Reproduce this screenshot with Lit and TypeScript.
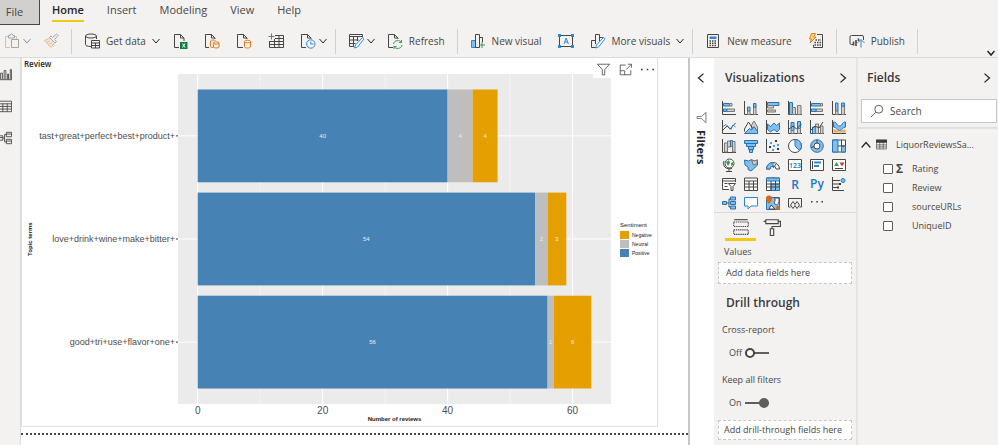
import { html, svg, css, LitElement, TemplateResult, SVGTemplateResult, nothing } from 'lit';
import { customElement, state } from 'lit/decorators.js';
import { classMap } from 'lit/directives/class-map.js';

interface RibbonItem {
  icon: string;
  title: string;
  label?: string;
  menu?: boolean;
  disabled?: boolean;
}

interface TopicRow {
  topic: string;
  positive: number;
  neutral: number;
  negative: number;
}

// 16 x 16 icons. Strokes are inherited, classes give the accent colours
const icons: Record<string, SVGTemplateResult> = {
  paste: svg`<path class="orange" d="M6 14.500H1.500V3.500H4M10 3.500h2.500V6"/><path d="M4.500 5V2.500h1.500a1.500 1.500 0 0 1 3 0h1.500V5zM7.500 6.500h7v8h-7z"/>`,
  brush: svg`<path class="orange fill-peach" d="M7 5 1.500 7.500 8 14.500l3.500-5zM4 9l3-1M6 11.500l3-2"/><path d="M6.500 4.500l5.500 5.500 1.500-1.500-2-2 3.500-4-1.500-1.500-4 3.500L8 3z"/>`,
  database: svg`<path d="M7 13.500c-3.500 0-5.500-.8-5.500-2V3M12.500 3v3"/><ellipse cx="7" cy="3" rx="5.500" ry="2"/><path d="M7.500 7.500h8v7.500h-8zM7.500 10h8M11.500 10v5M7.500 12.500h8"/>`,
  excel: svg`<path d="M7 14.500H2.500V1.500h6l3.500 3.500v3M8.500 1.500V5H12"/><path class="fill-green" d="M8 9h7.500v7H8z"/><path class="white" d="M10.500 10.500l2.500 4M13 10.500l-2.500 4"/>`,
  hub: svg`<path d="M5 14.500H1.500V1.500h6L11 5v1M7.500 1.500V5H11"/><path class="orange" d="M6.500 8v5.500c0 1 3 1 3 1M6.500 8c0-1.300 5-1.300 5 0M9.500 10v4c0 1.300 5.500 1.300 5.500 0v-4"/><ellipse class="orange" cx="12.200" cy="10" rx="2.700" ry="1.200"/>`,
  sql: svg`<path d="M7 14.500H1.500V1.500h6L11 5v1M7.500 1.500V5H11"/><path class="orange" d="M8.500 8.500v5.300c0 1.600 6 1.600 6 0V8.500"/><ellipse class="orange" cx="11.500" cy="8.500" rx="3" ry="1.300"/>`,
  enter: svg`<path d="M7 2.500h8.500v12h-14V8M7 5.500h8.500M2 8.500h13.500M2 11.500h13.500M6.500 6v8.500M11 3v11.500"/><path class="green" d="M3.500.5v6M.5 3.500h6"/>`,
  recent: svg`<path d="M6 14.500H1.500V1.500h6L11 5v1M7.500 1.500V5H11"/><circle class="blue" cx="10.800" cy="11" r="4.200"/><path class="blue" d="M10.800 8.500V11h2.500"/>`,
  transform: svg`<path d="M6 13.500H1.500v-12h13V4M1.500 3.500h13M1.500 7h9M1.500 10.500h6M5.500 4v9M9.500 4v4"/><path class="blue fill-white" d="M6.500 15l1-3 6.500-7c1-1 2.500.5 1.500 1.500L9.500 14z"/>`,
  refresh: svg`<path d="M6 14.500H1.500V1.500h6L11 5v1M7.500 1.500V5H11"/><path class="green" d="M6.500 11c.5-4 6.500-4.500 8-1.500M14.500 7v2.500H12M15 12c-.5 4-6.500 4.500-8 1.500M7 16v-2.500h2.500"/>`,
  newVisual: svg`<path class="blue fill-blue" d="M1.500 7.500h4v7h-4z"/><path d="M5.500 14.500v-13h4v13zM9.500 4.500h3V9"/><path class="green" d="M12 9v6M9 12h6"/>`,
  textBox: svg`<path d="M1.500 2.500h13v11h-13z"/><path class="blue" d="M6 11l2.200-6 2.200 6M6.700 9h3"/><path class="solid-blue" d="M0 1h3v3H0zM13 1h3v3h-3zM0 12h3v3H0zM13 12h3v3h-3z"/>`,
  moreVisuals: svg`<path d="M5.500 14.500h-4v-7h4M5.500 11V1.500h4V8M9.500 4.500h3v2"/><path class="blue fill-white" d="M5.500 15l1-3 6.500-7c1-1 2.500.5 1.500 1.500L8.500 14z"/>`,
  measure: svg`<path d="M2.500 1.500h11v13h-11z"/><path class="solid-blue" d="M4.500 3.500h7V6h-7z"/><path class="dots" d="M4.500 8h7M4.500 10.200h7M4.500 12.400h7"/>`,
  quick: svg`<path d="M9 1.500h5.500v13h-9V12"/><path class="dots" d="M7.500 7h5.500M6.500 9.500h6.500M6.500 12h6.500"/><path class="orange fill-amber" d="M3.500.5h4l-2 3.500h2.500l-6 6 1.500-4H1.500z"/>`,
  publish: svg`<path d="M4 11.500H2.500a1.500 1.500 0 0 1-1.500-1.500V4a1.500 1.500 0 0 1 1.500-1.500h10.500a1.500 1.500 0 0 1 1.500 1.500v3"/><path class="thick" d="M4.500 8.500v4M7 7v6M9.500 5.500V8"/><path class="blue" d="M12 14.500V7M8.500 10L12 6.500l3.500 3.500"/>`,
  report: svg`<path d="M.5 1v13.500H16M3 14V7h2v7M7 14V4h2v10M11 14V8h1v6M14 14V3h1.500v11"/>`,
  table: svg`<path d="M.5 2.500h15v12H.5zM.5 5.500h15M.5 8.500h15M.5 11.500h15M5.500 5v9.500M10.500 5v9.500"/>`,
  model: svg`<path d="M9.500 1.500h6v5h-6zM9.500 9.500h6v5h-6zM.5 5.500h5v5h-5zM9.500 3.500h6M9.500 11.500h6M.5 7.500h5M5.500 8h2M9.500 4h-2v8.500h2"/>`,
  funnel: svg`<path d="M.5 1.500h15L9.500 8v6.500h-3V8z"/>`,
  focus: svg`<path d="M8 2.500H1.500v12h13V9M1.500 9.500H7v5M9 8l6-6M11 1.500h4.500V6"/>`,
  more: svg`<path class="solid" d="M0 7h2v2H0zM7 7h2v2H7zM14 7h2v2h-2z"/>`,
  search: svg`<circle cx="10" cy="6" r="4.500"/><path d="M6.500 9.500L1 15"/>`,
  tableFilled: svg`<path d="M.5 1.500h15v13H.5zM.5 8.500h15M.5 11.500h15M5.500 5v9.500M10.500 5v9.500"/><path class="solid" d="M0 1h16v4.500H0z"/>`,
  wells: svg`<path stroke-dasharray="1.200 .7" d="M1.500 3.500h13v4h-13zM1.500 10.500h13v4h-13z"/><path d="M2 1.500h12"/>`,
  roller: svg`<path d="M2.500 1.500h11v3.500h-11zM2.500 3h-2M13.500 3h2v4.500H8v2M6.500 9.500h3v6h-3z"/>`,
};

// 14 x 14 glyphs of the visual gallery, in reading order
const axis = svg`<path d="M.5 0v13.500H14"/>`;
const visuals: Array<[string, SVGTemplateResult]> = [
  ['Stacked bar chart', svg`${axis}<path class="b" d="M1.500 2.500h6v2.500h-6z"/><path class="g" d="M7.500 2.500h2.500v2.500H7.500zM5 8h7.500v2.500H5z"/><path class="b" d="M1.500 8h3v2.500h-3z"/>`],
  ['Stacked column chart', svg`${axis}<path class="b" d="M3.500 6h2.500v4H3.500z"/><path class="g" d="M3.500 10h2.500v3.500H3.500zM9.500 6h2.500v7.500H9.500z"/><path class="b" d="M9.500 2.500h2.500v3.500H9.500z"/>`],
  ['Clustered bar chart', svg`${axis}<path class="b" d="M1.500 1.500h11.500v3H1.500z"/><path class="g" d="M1.500 4.500h6v2.500h-6zM1.500 9h8v2h-8z"/>`],
  ['Clustered column chart', svg`${axis}<path class="b" d="M1.500 1.500h3v12h-3z"/><path class="g" d="M4.500 6.500h3v7h-3zM9.500 4.500h3.500v9H9.500z"/>`],
  ['100% stacked bar chart', svg`${axis}<path class="b" d="M1.500 2.500h9v2.500h-9z"/><path class="g" d="M10.500 2.500h2v2.500h-2zM6 8h6.500v2.500H6z"/><path class="b" d="M1.500 8h4.500v2.500H1.500z"/>`],
  ['100% stacked column chart', svg`${axis}<path class="b" d="M3.500 2h2.500v8H3.500z"/><path class="g" d="M3.500 10h2.500v3.500H3.500zM9.500 5h3v8.500h-3z"/><path class="b" d="M9.500 2h3v3h-3z"/>`],
  ['Line chart', svg`${axis}<path d="M1 10l4-4 3 3 5.500-6"/><path class="bl" d="M1 6.500l3-2 5 5 2-4.500 2.500 2"/>`],
  ['Area chart', svg`<path class="g" d="M7 6l3-5 3.500 6v6H9z"/><path d="M.5 11.500V9l4-7 4 6"/><path class="b" d="M.5 13.500l5-5 2 1.500 2.500-3.500 3.500 5v2z"/>`],
  ['Stacked area chart', svg`${axis}<path class="b" d="M1.500 4l3 2.500L8 3l2.500 2.500L13.500 3v6.500L11 12l-3-2.500-3.500 2.500-3-2.500z"/>`],
  ['Line and stacked column chart', svg`${axis}<path class="b" d="M3 2.500h3v8H3zM9.500 1.500h3v7h-3z"/><path class="g" d="M3 10.500h3v3H3zM9.500 8.500h3v5h-3z"/><path d="M1 9l4-3 3.500 3L13.500 4"/>`],
  ['Line and clustered column chart', svg`${axis}<path class="b" d="M2.500 7h3v6.500h-3z"/><path class="g" d="M5.500 4h3v9.500h-3zM10.500 6h2.500v7.500h-2.500z"/><path d="M1 10l4-4 4 2 4-6"/>`],
  ['Ribbon chart', svg`${axis}<path class="o" d="M1.500 9c2 0 3 2.500 6 2.500s4-2.500 6-2.500v3.500h-12z"/><path class="b" d="M1.500 2c4 0 3 4 6 4s2-4 6-4v5c-3 0-3 3.500-6 3.500S4.500 7 1.500 7z"/>`],
  ['Waterfall chart', svg`${axis}<path class="g" d="M2.500 4h3v9h-3zM5.500 2h3v6h-3z"/><path class="b" d="M8.500 1.500h2v6h-2z"/><path class="g" d="M10.500 2.500H13v10.500h-2.500z"/>`],
  ['Funnel', svg`<path class="b" d="M.5 1.500h13v3H.5zM2.500 4.500h9v3h-9zM4.500 7.500h5v3h-5zM5.500 10.500h3v3h-3z"/>`],
  ['Scatter chart', svg`${axis}<path class="solid" d="M3 7h2v2H3zM9 1h2v2H9zM11 9h2v2h-2z"/><path class="sb" d="M4 3h2v2H4zM7 6h2v2H7zM11 5h2v2h-2zM6 10h2v2H6z"/>`],
  ['Pie chart', svg`<circle cx="7" cy="7" r="6.500" class="w"/><path class="b" d="M7 .5V7l4.500 4.700A6.500 6.500 0 0 0 7 .5z"/>`],
  ['Donut chart', svg`<circle cx="7" cy="7" r="6.300" class="b"/><circle cx="7" cy="7" r="3" class="w"/><path d="M7 .7V4M1 8.500l3-.7"/>`],
  ['Treemap', svg`<path class="w" d="M.5 1h13v12H.5z"/><path class="b" d="M.5 1H6v12H.5zM9.500 7h4v6h-4z"/><path d="M6 7h7.500M9.500 1v6"/>`],
  ['Map', svg`<circle cx="7.500" cy="5.500" r="4.500" class="w"/><path class="gr" d="M4 4l3-2 1 3-2 3zM9 5l2-1v3l-2 1z"/><path d="M2 3c-2 5 2 9 8 7.500M7 11v2.500M4 13.500h6"/>`],
  ['Filled map', svg`<path class="b" d="M.5 2l4 1 3-1.500L10 3l3.500-1v5l-3 3-3.500 3-3-1.500V9L1 7z"/><path class="g" d="M7.500 2L10 3l3.500-1-1 4-3 1z"/>`],
  ['Gauge', svg`<path class="w" d="M.5 11a6.500 6.500 0 0 1 13 0H10a3 3 0 0 0-6 0z"/><path class="b" d="M.5 11A6.500 6.500 0 0 1 7 4.500V8a3 3 0 0 0-3 3z"/><path d="M7 10l3-4"/>`],
  ['Card', svg`<path class="w" d="M.5 1.500h13v11H.5z"/><text x="7" y="9.500" font-size="7" text-anchor="middle">123</text>`],
  ['Multi-row card', svg`<path class="w" d="M.5 1.500h13v11H.5z"/><path d="M2.500 3v8"/><path class="bl2" d="M4 4.500h7M4 8h5"/>`],
  ['KPI', svg`<path class="w" d="M.5 1.500h13v11H.5z"/><path class="gr" d="M2 8l2.500-4L7 8z"/><path class="rd" d="M7.500 4.500h5L10 8.500z"/><path d="M3 10.500h8"/>`],
  ['Slicer', svg`<path class="w" d="M7 12.500H.5v-11h13V5M.5 4h13M2.500 6.500h3M2.500 9.500h3"/><path class="w" d="M6.500 6.500h7l-2.500 3v4H9v-4z"/>`],
  ['Table', svg`<path class="w" d="M.5 1h13v12.500H.5zM.5 4h13M.5 7h13M.5 10h13M5 4v9.500M9.500 4v9.500"/>`],
  ['Matrix', svg`<path class="w" d="M.5 1h13v12.500H.5z"/><path class="b" d="M5 7h8.500v6.500H5zM.5 1h13v3H.5z"/><path d="M.5 7h13M.5 10h13M5 4v9.500M9.500 4v9.500"/>`],
  ['R script visual', svg`<text x="7" y="11.500" font-size="12" text-anchor="middle">R</text>`],
  ['Python visual', svg`<text x="7" y="11" font-size="12" text-anchor="middle">Py</text>`],
  ['Key influencers', svg`<path d="M.5 0v13.500H12M1 3.500h7M1 7h6M1 10.500h5"/><circle cx="11" cy="3.500" r="2" class="b"/><path class="solid" d="M7 6h2v2H7zM5 9.500h2v2H5z"/>`],
  ['Decomposition tree', svg`<path d="M4 7h3M7 3h2M7 11h2M7 3v8"/><path class="b" d="M.5 5.500h4v3h-4zM8.500 1h5v3h-5zM8.500 5.500h5v3h-5zM8.500 10h5v3h-5z"/>`],
  ['Q&A', svg`<path class="wb" d="M.5 1.500h13v8.500H7l-3 3V10H.5z"/>`],
  ['ArcGIS Maps', svg`<path class="b" d="M.5 1.500h13v12H.5z"/><path class="w" d="M8 2c3 2-1 4 1 6s3 0 4-2V2zM3 13l2-4 4 4z"/><path class="od" d="M6 2.500a3 3 0 1 0-6 0C0 5 3 8 3 8s3-3 3-5.500z"/><circle cx="12" cy="12" r="2" class="od"/>`],
  ['Power Apps', svg`<path d="M2.500 11H.5V2.500h13V11h-2"/><path d="M5 5.500L2.500 9 5 12.500 7 9.500l2 3L11.500 9 9 5.500 7 8.500z"/>`],
  ['Get more visuals', svg`<path class="solid" d="M1 5h1.500v1.500H1zM6.300 5h1.500v1.500H6.300zM11.500 5H13v1.500h-1.500z"/>`],
];

const ribbon: RibbonItem[][] = [
  [
    { icon: 'paste', title: 'Paste', menu: true, disabled: true },
    { icon: 'brush', title: 'Format painter', disabled: true },
  ],
  [
    { icon: 'database', title: 'Get data', label: 'Get data', menu: true },
    { icon: 'excel', title: 'Excel' },
    { icon: 'hub', title: 'Datasets' },
    { icon: 'sql', title: 'SQL Server' },
    { icon: 'enter', title: 'Enter data' },
    { icon: 'recent', title: 'Recent sources', menu: true },
  ],
  [
    { icon: 'transform', title: 'Transform data', menu: true },
    { icon: 'refresh', title: 'Refresh', label: 'Refresh' },
  ],
  [
    { icon: 'newVisual', title: 'New visual', label: 'New visual' },
    { icon: 'textBox', title: 'Text box' },
    { icon: 'moreVisuals', title: 'More visuals', label: 'More visuals', menu: true },
  ],
  [
    { icon: 'measure', title: 'New measure', label: 'New measure' },
    { icon: 'quick', title: 'Quick measure' },
  ],
  [{ icon: 'publish', title: 'Publish', label: 'Publish' }],
];

const icon = (name: string): TemplateResult =>
  html`<svg class="icon" viewBox="0 0 16 16" aria-hidden="true">${icons[name]}</svg>`;

const chevron = (direction: string): TemplateResult =>
  html`<svg class="chevron ${direction}" viewBox="0 0 8 8" aria-hidden="true">
    <path d="M.5 2L4 6l3.500-4" />
  </svg>`;

const iconStyles = css`
  svg {
    display: block;
    flex: none;
    fill: none;
    stroke: #484644;
    stroke-width: 1;
  }

  .icon {
    width: 16px;
    height: 16px;
  }

  .chevron {
    width: 8px;
    height: 8px;
    stroke: #252423;
  }

  .chevron.up {
    transform: rotate(180deg);
  }

  .chevron.left {
    transform: rotate(90deg);
  }

  .chevron.right {
    transform: rotate(-90deg);
  }

  .orange {
    stroke: #e07b1a;
  }

  .green {
    stroke: #3a9b4b;
  }

  .blue {
    stroke: #2b88d8;
  }

  .white {
    stroke: #fff;
  }

  .fill-green {
    fill: #107c41;
    stroke: none;
  }

  .fill-blue {
    fill: #83beec;
  }

  .fill-white {
    fill: #fff;
  }

  .fill-amber {
    fill: #fbd38b;
  }

  .fill-peach {
    fill: #f8d9bb;
  }

  .solid-blue {
    fill: #2b88d8;
    stroke: none;
  }

  .solid {
    fill: #3b3a39;
    stroke: none;
  }

  .dots {
    stroke-width: 1.5;
    stroke-dasharray: 1.5 1;
  }

  .thick {
    stroke-width: 1.6;
  }

  button {
    background: none;
    border: none;
    font: inherit;
    color: inherit;
    padding: 0;
    cursor: pointer;
  }
`;

@customElement('topic-chart')
export class TopicChart extends LitElement {
  rows: TopicRow[] = [
    { topic: 'tast+great+perfect+best+product+', positive: 40, neutral: 4, negative: 4 },
    { topic: 'love+drink+wine+make+bitter+', positive: 54, neutral: 2, negative: 3 },
    { topic: 'good+tri+use+flavor+one+', positive: 56, neutral: 1, negative: 6 },
  ];

  // the x scale has 5% of the largest total as padding on both sides
  pad = 63 * 0.05;

  span(value: number): number {
    return (value / (63 + this.pad * 2)) * 100;
  }

  x(value: number): number {
    return this.span(value + this.pad);
  }

  // category centres, 0.6 of a band from each edge
  y(index: number): number {
    return ((index + 0.6) / 3.2) * 100;
  }

  renderRow(row: TopicRow, index: number): SVGTemplateResult {
    const bandHeight = (0.9 / 3.2) * 100;
    const centre = this.y(index);
    let start = 0;

    return svg`
      <text class="axis-label end" x="-3" y="${centre}%" dy="3">${row.topic}</text>
      <line class="tick" x1="-2" x2="0" y1="${centre}%" y2="${centre}%" />
      ${(['positive', 'neutral', 'negative'] as const).map(key => {
        const value = row[key];
        const from = start;
        start += value;
        return svg`
          <rect class=${key} x="${this.x(from)}%" y="${centre - bandHeight / 2}%"
            width="${this.span(value)}%" height="${bandHeight}%" />
          <text class="value" x="${this.x(from + value / 2)}%" y="${centre}%" dy="2">${value}</text>
        `;
      })}
    `;
  }

  render() {
    return html`
      <div class="y-title">Topic terms</div>
      <svg class="panel" role="img" aria-label="Number of reviews by topic terms">
        <rect class="back" width="100%" height="100%" />
        ${[10, 30, 50].map(
          v => svg`<line class="grid" x1="${this.x(v)}%" x2="${this.x(v)}%" y1="0" y2="100%" />`
        )}
        ${[0, 20, 40, 60].map(
          v => svg`
            <line class="grid major" x1="${this.x(v)}%" x2="${this.x(v)}%" y1="0" y2="100%" />
            <text class="axis-label number" x="${this.x(v)}%" y="100%" dy="10">${v}</text>`
        )}
        ${this.rows.map(
          (_, i) => svg`<line class="grid major" x1="0" x2="100%" y1="${this.y(i)}%" y2="${this.y(i)}%" />`
        )}
        ${this.rows.map((row, i) => this.renderRow(row, i))}
      </svg>
      <div class="legend">
        <span class="legend-title">Sentiment</span>
        ${['Negative', 'Neutral', 'Positive'].map(
          name => html`<span class="key"><i class="swatch ${name.toLowerCase()}"></i>${name}</span>`
        )}
      </div>
      <div class="x-title">Number of reviews</div>
    `;
  }

  static styles = css`
    :host {
      display: grid;
      grid-template-columns: 14px minmax(0, 1fr) 46px;
      grid-template-rows: 330px 22px;
      font-family: 'Liberation Sans', Arial, sans-serif;
      font-size: 6px;
      line-height: 8px;
      color: #1a1a1a;
    }

    .y-title {
      writing-mode: vertical-rl;
      transform: rotate(180deg);
      text-align: center;
      font-weight: bold;
      padding-right: 4px;
    }

    .panel {
      display: block;
      width: calc(100% - 142px);
      height: 100%;
      margin-left: 142px;
      overflow: visible;
    }

    .back {
      fill: #ebebeb;
    }

    .grid {
      stroke: #fff;
      stroke-width: 0.5;
    }

    .grid.major {
      stroke-width: 1;
    }

    .tick {
      stroke: #333;
    }

    .axis-label {
      font-size: 9px;
      fill: #4d4d4d;
      text-anchor: middle;
    }

    .axis-label.number {
      font-size: 10px;
    }

    .axis-label.end {
      text-anchor: end;
    }

    .value {
      font-size: 6px;
      fill: #ebebeb;
      text-anchor: middle;
    }

    .positive {
      fill: #4682b4;
      background: #4682b4;
    }

    .neutral {
      fill: #bebebe;
      background: #bebebe;
    }

    .negative {
      fill: #e69f00;
      background: #e69f00;
    }

    .legend {
      display: flex;
      flex-direction: column;
      justify-content: center;
      padding-left: 9px;
    }

    .legend-title {
      margin-bottom: 2px;
    }

    .key {
      display: flex;
      align-items: center;
      gap: 3px;
      height: 9px;
      font-size: 5px;
    }

    .swatch {
      width: 9px;
      height: 8px;
    }

    .x-title {
      grid-column: 2;
      margin-left: 142px;
      padding-top: 11px;
      text-align: center;
      font-weight: bold;
    }
  `;
}

@customElement('visualizations-pane')
export class VisualizationsPane extends LitElement {
  @state() crossReport = false;

  @state() keepFilters = true;

  renderToggle(id: string, label: string, on: boolean, change: (v: boolean) => void) {
    return html`
      <label class="toggle-label" for=${id}>${label}</label>
      <div class="toggle">
        <span>${on ? 'On' : 'Off'}</span>
        <input
          id=${id}
          type="checkbox"
          role="switch"
          .checked=${on}
          @change=${(e: Event) => change((e.target as HTMLInputElement).checked)}
        />
      </div>
    `;
  }

  render() {
    return html`
      <header>
        <h2>Visualizations</h2>
        <button aria-label="Collapse visualizations">${chevron('right')}</button>
      </header>
      <div class="gallery">
        ${visuals.map(
          ([name, glyph]) => html`<button title=${name} aria-label=${name}>
            <svg viewBox="0 0 14 14" aria-hidden="true">${glyph}</svg>
          </button>`
        )}
      </div>
      <div class="modes">
        <button class="active" aria-label="Fields">${icon('wells')}</button>
        <button aria-label="Format">${icon('roller')}</button>
      </div>
      <div class="well-label">Values</div>
      <div class="well">Add data fields here</div>
      <h2 class="drill">Drill through</h2>
      ${this.renderToggle('cross', 'Cross-report', this.crossReport, v => {
        this.crossReport = v;
      })}
      ${this.renderToggle('keep', 'Keep all filters', this.keepFilters, v => {
        this.keepFilters = v;
      })}
      <div class="well short">Add drill-through fields here</div>
    `;
  }

  static styles = [
    iconStyles,
    css`
      :host {
        display: block;
        border-right: 2px solid #e6e4e2;
        font-size: 9px;
      }

      header {
        display: flex;
        align-items: center;
        justify-content: space-between;
        height: 40px;
        padding: 0 8px 0 11px;
      }

      h2 {
        margin: 0;
        font-size: 12px;
        line-height: 20px;
        font-weight: 600;
        color: #3b3a39;
      }

      .chevron {
        width: 10px;
        height: 10px;
      }

      .gallery {
        display: grid;
        grid-template-columns: repeat(6, 22px);
        grid-auto-rows: 19px;
        padding: 0 4px;
        border-bottom: 1px solid #dddbd9;
      }

      .gallery button {
        display: grid;
        place-items: center;
      }

      .gallery svg {
        width: 14px;
        height: 14px;
        overflow: visible;
      }

      .gallery text {
        fill: #1a78c2;
        stroke: none;
        font-weight: 600;
      }

      .b {
        fill: #83beec;
        stroke: #2474b5;
      }

      .g {
        fill: #d2d0ce;
        stroke: #797775;
      }

      .w {
        fill: #fff;
      }

      .wb {
        fill: #fff;
        stroke: #2b88d8;
      }

      .o {
        fill: #f3a54a;
        stroke: none;
      }

      .od {
        fill: #d8681d;
        stroke: none;
      }

      .gr {
        fill: #3a9b4b;
        stroke: none;
      }

      .rd {
        fill: #d13438;
        stroke: none;
      }

      .sb {
        fill: #4aa0e0;
        stroke: none;
      }

      .bl {
        stroke: #2b88d8;
      }

      .bl2 {
        stroke: #2b88d8;
        stroke-width: 2;
      }

      .modes {
        display: flex;
        padding: 2px 0 0 11px;
      }

      .modes button {
        display: grid;
        place-items: center;
        width: 31px;
        height: 26px;
        border-bottom: 3px solid transparent;
      }

      .modes .active {
        border-bottom-color: #f2c811;
      }

      .modes .icon {
        width: 18px;
        height: 18px;
      }

      .well-label {
        padding: 4px 10px 3px;
        line-height: 14px;
      }

      .well {
        margin: 0 4px;
        padding: 0 7px;
        border: 1px dashed #c8c6c4;
        background: #fff;
        line-height: 20px;
        white-space: nowrap;
      }

      .well.short {
        padding: 0 5px;
        line-height: 18px;
      }

      .drill {
        padding: 9px 12px 10px;
      }

      .toggle-label {
        display: block;
        padding: 0 8px;
        line-height: 14px;
      }

      .toggle {
        display: flex;
        align-items: center;
        gap: 3px;
        height: 20px;
        padding: 6px 0 10px 15px;
      }

      .toggle span {
        width: 13px;
      }

      .toggle + .well {
        margin-top: -3px;
      }

      input {
        appearance: none;
        display: flex;
        align-items: center;
        width: 24px;
        height: 10px;
        margin: 0;
        background: linear-gradient(#605e5c, #605e5c) center / 100% 2px no-repeat;
      }

      input::before {
        content: '';
        box-sizing: border-box;
        width: 10px;
        height: 10px;
        border: 2px solid #484644;
        border-radius: 50%;
        background: #fff;
      }

      input:checked {
        justify-content: flex-end;
      }

      input:checked::before {
        border-color: #605e5c;
        background: #605e5c;
      }
    `,
  ];
}

@customElement('fields-pane')
export class FieldsPane extends LitElement {
  fields = ['Rating', 'Review', 'sourceURLs', 'UniqueID'];

  @state() open = true;

  render() {
    return html`
      <header>
        <h2>Fields</h2>
        <button aria-label="Collapse fields">${chevron('right')}</button>
      </header>
      <label class="search">
        ${icon('search')}
        <input type="text" placeholder="Search" aria-label="Search" />
      </label>
      <button
        class="source"
        aria-expanded=${this.open}
        @click=${() => {
          this.open = !this.open;
        }}
      >
        ${chevron(this.open ? 'up' : 'down')} ${icon('tableFilled')}
        <span>LiquorReviewsSa...</span>
      </button>
      ${this.open
        ? html`<ul>
            ${this.fields.map(
              name => html`<li>
                <label>
                  <input type="checkbox" />
                  <span class="sum">${name === 'Rating' ? 'Σ' : nothing}</span>
                  ${name}
                </label>
              </li>`
            )}
          </ul>`
        : nothing}
    `;
  }

  static styles = [
    iconStyles,
    css`
      :host {
        display: block;
        font-size: 9px;
      }

      header {
        display: flex;
        align-items: center;
        justify-content: space-between;
        height: 40px;
        padding: 0 6px 0 9px;
      }

      h2 {
        margin: 0;
        font-size: 12px;
        font-weight: 600;
        color: #3b3a39;
      }

      header .chevron {
        width: 10px;
        height: 10px;
      }

      .search {
        display: flex;
        align-items: center;
        gap: 6px;
        height: 22px;
        margin: 1px 1px 4px 3px;
        padding-left: 8px;
        border: 1px solid #c8c6c4;
        background: #fff;
      }

      .search .icon {
        width: 14px;
        height: 14px;
      }

      .search input {
        flex: 1;
        min-width: 0;
        padding: 0;
        border: none;
        outline: none;
        background: none;
        font: inherit;
        font-size: 10px;
      }

      .search input::placeholder {
        color: #484644;
      }

      .source {
        display: flex;
        align-items: center;
        width: 100%;
        height: 31px;
        padding: 2px 0 0 3px;
        border-top: 2px solid #e1dfdd;
        white-space: nowrap;
      }

      .source .chevron {
        width: 10px;
        height: 10px;
        margin-right: 5px;
      }

      .source .icon {
        width: 11px;
        height: 11px;
        margin-right: 9px;
      }

      ul {
        list-style: none;
        margin: 1px 0 0;
        padding: 0 0 0 25px;
      }

      li label {
        display: flex;
        align-items: center;
        height: 19px;
      }

      li input {
        appearance: none;
        box-sizing: border-box;
        width: 10px;
        height: 10px;
        margin: 0;
        border: 1px solid #605e5c;
        border-radius: 1px;
        background: #fff;
      }

      li input:checked {
        background: #605e5c;
      }

      .sum {
        width: 19px;
        padding-left: 3px;
        box-sizing: border-box;
        font-weight: bold;
        font-size: 12px;
      }
    `,
  ];
}

@customElement('app-root')
export class AppRoot extends LitElement {
  @state() activeTab = 'Home';

  tabs = ['Home', 'Insert', 'Modeling', 'View', 'Help'];

  renderItem(item: RibbonItem): TemplateResult {
    return html`<button
      class=${classMap({ item: true, menu: !!item.menu })}
      title=${item.title}
      ?disabled=${item.disabled}
    >
      ${icon(item.icon)} ${item.label ? html`<span>${item.label}</span>` : nothing}
      ${item.menu ? chevron('down') : nothing}
    </button>`;
  }

  render() {
    return html`
      <nav>
        <button class="file">File</button>
        ${this.tabs.map(
          tab => html`<button
            class=${classMap({ tab: true, active: tab === this.activeTab })}
            @click=${() => {
              this.activeTab = tab;
            }}
          >
            ${tab}
          </button>`
        )}
      </nav>
      <div class="ribbon">
        ${ribbon.map(
          group => html`<div class="group">${group.map(item => this.renderItem(item))}</div>`
        )}
        <button class="collapse" aria-label="Collapse ribbon">${chevron('down')}</button>
      </div>
      <main>
        <div class="rail">
          <button aria-label="Report">${icon('report')}</button>
          <button aria-label="Data">${icon('table')}</button>
          <button aria-label="Model">${icon('model')}</button>
        </div>
        <section class="canvas">
          <article class="visual">
            <h3>Review</h3>
            <topic-chart></topic-chart>
            <div class="visual-tools">
              <button aria-label="Filters">${icon('funnel')}</button>
              <button aria-label="Focus mode">${icon('focus')}</button>
              <button aria-label="More options">${icon('more')}</button>
            </div>
          </article>
          <div class="page-edge"></div>
        </section>
        <aside class="filters">
          <button aria-label="Expand filters">${chevron('left')}</button>
          <span class="filters-title">${icon('funnel')}Filters</span>
        </aside>
        <visualizations-pane></visualizations-pane>
        <fields-pane></fields-pane>
      </main>
    `;
  }

  static styles = [
    iconStyles,
    css`
      :host {
        display: flex;
        flex-direction: column;
        min-height: 100vh;
        background: #f3f2f1;
        color: #484644;
        font-family: 'Open Sans', 'Noto Sans', sans-serif;
        font-size: 11px;
        line-height: 14px;
      }

      nav {
        display: flex;
        align-items: flex-start;
        gap: 23px;
      }

      .file {
        width: 40px;
        height: 25px;
        margin-right: -11px;
        padding-right: 10px;
        background: #d2d0ce;
        border: 1px solid #484644;
        border-width: 0 1px 1px 0;
      }

      .tab {
        height: 22px;
        border-bottom: 2px solid transparent;
      }

      .tab.active {
        border-bottom-color: #f2c811;
        color: #252423;
        font-weight: 600;
      }

      .ribbon {
        display: flex;
        align-items: center;
        height: 32px;
        border-bottom: 1px solid #dddbd9;
        font-size: 10px;
      }

      .group {
        display: flex;
        align-items: center;
        height: 25px;
        padding: 0 4px;
        border-right: 1px solid #d2d0ce;
      }

      .group:first-child {
        margin-left: -8px;
      }

      .item {
        display: flex;
        align-items: center;
        gap: 6px;
        padding: 0 8px;
        white-space: nowrap;
      }

      .item.menu {
        padding-right: 4px;
      }

      .item svg + .chevron {
        margin-left: -3px;
      }

      .item:disabled {
        opacity: 0.45;
      }

      .collapse {
        align-self: flex-end;
        margin: 0 3px 0 auto;
      }

      .collapse .chevron {
        stroke-width: 1.5;
      }

      main {
        flex: 1;
        display: grid;
        grid-template-columns: 21px minmax(0, 1fr) 26px 144px 140px;
      }

      .rail {
        display: flex;
        flex-direction: column;
        gap: 18px;
        padding-top: 9px;
        border-right: 1px solid #dddbd9;
        overflow: hidden;
      }

      .rail .icon {
        width: 14px;
        height: 14px;
        margin-left: -2px;
      }

      .canvas {
        background: #fff;
      }

      .visual {
        position: relative;
        margin-right: 30px;
        border: 1px solid #e1dfdd;
        border-top: none;
      }

      h3 {
        margin: 0;
        padding: 0 0 4px 2px;
        font-size: 8px;
        line-height: 12px;
        font-weight: 600;
        color: #252423;
      }

      .visual-tools {
        position: absolute;
        top: 3px;
        right: 0;
        display: flex;
        gap: 9px;
        padding: 2px 3px 2px 4px;
        background: #fff;
      }

      .visual-tools .icon {
        width: 13px;
        height: 13px;
      }

      .page-edge {
        margin-top: 6px;
        border-top: 2px dotted #484644;
      }

      .filters {
        display: flex;
        flex-direction: column;
        align-items: center;
        gap: 29px;
        padding: 15px 2px 0 0;
        border-left: 2px solid #c8c6c4;
        background: #fff;
      }

      .filters .chevron {
        width: 10px;
        height: 10px;
      }

      .filters-title {
        display: flex;
        align-items: center;
        gap: 7px;
        writing-mode: vertical-rl;
        font-size: 11px;
        font-weight: 700;
        color: #252423;
      }

      .filters-title .icon {
        width: 11px;
        height: 11px;
        transform: rotate(90deg);
      }
    `,
  ];
}
